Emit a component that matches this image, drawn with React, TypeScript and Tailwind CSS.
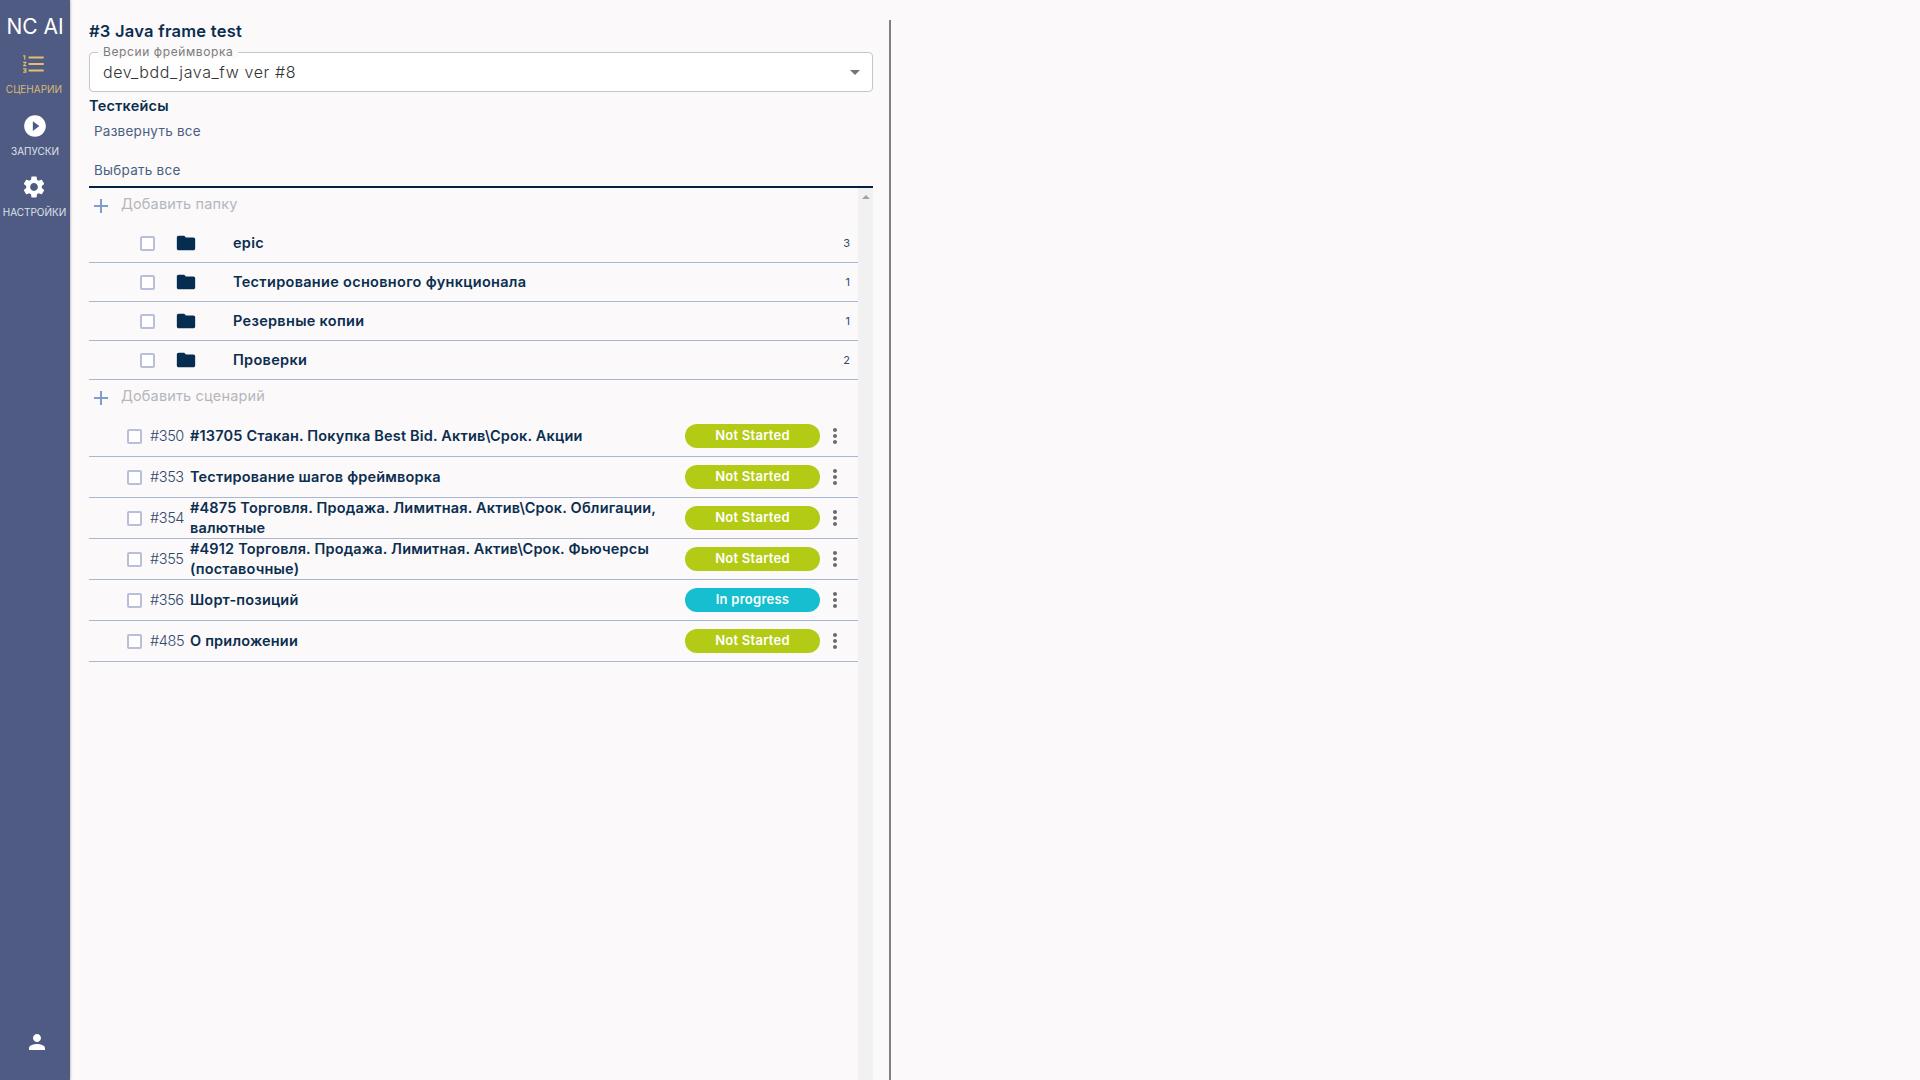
import { ReactNode } from "react";

const font = "font-['Inter','Noto_Sans',sans-serif]";

const icons = {
  list: "M2 17h2v.5H3v1h1v.5H2v1h3v-4H2v1zm1-9h1V4H2v1h1v3zm-1 3h1.8L2 13.1v.9h3v-1H3.2L5 10.9V10H2v1zm5-6v2h14V5H7zm0 14h14v-2H7v2zm0-6h14v-2H7v2z",
  play: "M12 2C6.48 2 2 6.48 2 12s4.48 10 10 10 10-4.48 10-10S17.52 2 12 2zm-2 14.5v-9l6 4.5-6 4.5z",
  gear: "M19.14 12.94c.04-.3.06-.61.06-.94 0-.32-.02-.64-.07-.94l2.03-1.58c.18-.14.23-.41.12-.61l-1.92-3.32c-.12-.22-.37-.29-.59-.22l-2.39.96c-.5-.38-1.03-.7-1.62-.94l-.36-2.54c-.04-.24-.24-.41-.48-.41h-3.84c-.24 0-.43.17-.47.41l-.36 2.54c-.59.24-1.13.57-1.62.94l-2.39-.96c-.22-.08-.47 0-.59.22L2.74 8.87c-.12.21-.08.47.12.61l2.03 1.58c-.05.3-.09.63-.09.94s.02.64.07.94l-2.03 1.58c-.18.14-.23.41-.12.61l1.92 3.32c.12.22.37.29.59.22l2.39-.96c.5.38 1.03.7 1.62.94l.36 2.54c.05.24.24.41.48.41h3.84c.24 0 .44-.17.47-.41l.36-2.54c.59-.24 1.13-.56 1.62-.94l2.39.96c.22.08.47 0 .59-.22l1.92-3.32c.12-.22.07-.47-.12-.61l-2.01-1.58zM12 15.6c-1.98 0-3.6-1.62-3.6-3.6s1.62-3.6 3.6-3.6 3.6 1.62 3.6 3.6-1.62 3.6-3.6 3.6z",
  person: "M12 12c2.21 0 4-1.79 4-4s-1.79-4-4-4-4 1.79-4 4 1.79 4 4 4zm0 2c-2.67 0-8 1.34-8 4v2h16v-2c0-2.66-5.33-4-8-4z",
  folder: "M10 4H4c-1.1 0-1.99.9-1.99 2L2 18c0 1.1.9 2 2 2h16c1.1 0 2-.9 2-2V8c0-1.1-.9-2-2-2h-8l-2-2z",
  more: "M12 8c1.1 0 2-.9 2-2s-.9-2-2-2-2 .9-2 2 .9 2 2 2zm0 2c-1.1 0-2 .9-2 2s.9 2 2 2 2-.9 2-2-.9-2-2-2zm0 6c-1.1 0-2 .9-2 2s.9 2 2 2 2-.9 2-2-.9-2-2-2z",
  plus: "M19 13h-6v6h-2v-6H5v-2h6V5h2v6h6v2z",
};

function Icon({ d, className }: { d: string; className: string }) {
  return (
    <svg viewBox="0 0 24 24" fill="currentColor" className={className}>
      <path d={d} />
    </svg>
  );
}

function NavItem({ d, label, active, className }: { d: string; label: string; active?: boolean; className: string }) {
  return (
    <div className={`flex flex-col items-center ${className} ${active ? "text-[#e5bf6c]" : "text-white"}`}>
      <Icon d={d} className="w-[26px] h-[26px]" />
      <span className={`mt-[6px] text-[10px] leading-[13px] ${active ? "text-[#d9b977]" : "text-[#dfe2ea]"}`}>{label}</span>
    </div>
  );
}

function Checkbox({ className }: { className: string }) {
  return <span className={`block w-[15px] h-[15px] shrink-0 rounded-[2px] border-2 border-[#b9bfdb] bg-white ${className}`} />;
}

function AddRow({ label, className }: { label: string; className: string }) {
  return (
    <div className={`flex items-center text-[#b4b7bd] ${className}`}>
      <Icon d={icons.plus} className="w-[24px] h-[24px] text-[#7f9cce] mt-[4px]" />
      <span className="ml-[8px] text-[14.5px] tracking-[0.15px]">{label}</span>
    </div>
  );
}

function FolderRow({ title, count }: { title: string; count: number }) {
  return (
    <div className="flex items-center h-[39px] border-b border-[#a9b7d1]">
      <Checkbox className="ml-[51px]" />
      <Icon d={icons.folder} className="w-[22px] h-[22px] ml-[20px] text-[#062c50]" />
      <span className="ml-[36px] text-[14.5px] font-semibold text-[#0b2e4f] tracking-[0.3px]">{title}</span>
      <span className="ml-auto mr-[8px] text-[11px] text-[#32496b]">{count}</span>
    </div>
  );
}

function Pill({ status }: { status: string }) {
  const bg = status === "In progress" ? "bg-[#15bfcf]" : "bg-[#b4cb15]";
  return (
    <span className={`flex items-center justify-center w-[135px] h-[24px] shrink-0 rounded-full text-white text-[13px] font-semibold tracking-[0.25px] ${bg}`}>
      {status}
    </span>
  );
}

function ScenarioRow({ id, title, status }: { id: string; title: ReactNode; status: string }) {
  return (
    <div className="flex items-center h-[41px] border-b border-[#a9b7d1]">
      <Checkbox className="ml-[38px]" />
      <span className="ml-[8px] w-[40px] shrink-0 text-[14.5px] font-light tracking-[-0.4px] text-[#32496b]">{id}</span>
      <span className="w-[495px] shrink-0 text-[14.5px] leading-[20px] font-semibold text-[#0b2e4f] tracking-[0.18px] whitespace-pre-line">{title}</span>
      <Pill status={status} />
      <Icon d={icons.more} className="w-[24px] h-[24px] ml-[3px] text-[#6b6b6b]" />
    </div>
  );
}

const folders = [
  { title: "epic", count: 3 },
  { title: "Тестирование основного функционала", count: 1 },
  { title: "Резервные копии", count: 1 },
  { title: "Проверки", count: 2 },
];

const scenarios = [
  { id: "#350", title: "#13705 Стакан. Покупка Best Bid. Актив\\Срок. Акции", status: "Not Started" },
  { id: "#353", title: "Тестирование шагов фреймворка", status: "Not Started" },
  { id: "#354", title: "#4875 Торговля. Продажа. Лимитная. Актив\\Срок. Облигации,\nвалютные", status: "Not Started" },
  { id: "#355", title: "#4912 Торговля. Продажа. Лимитная. Актив\\Срок. Фьючерсы\n(поставочные)", status: "Not Started" },
  { id: "#356", title: "Шорт-позиций", status: "In progress" },
  { id: "#485", title: "О приложении", status: "Not Started" },
];

export default function App() {
  return (
    <div className={`flex h-[1080px] overflow-hidden bg-[#fbf9fa] ${font}`}>
      {/* Sidebar */}
      <aside className="flex flex-col items-center w-[70px] shrink-0 bg-[#4f5b82] shadow-[1px_0_2px_rgba(0,0,0,0.2)]">
        <div className="mt-[14px] text-[21px] leading-[25px] text-white whitespace-nowrap">NC AI</div>
        <NavItem d={icons.list} label="СЦЕНАРИИ" active className="mt-[12px] -ml-[2px]" />
        <NavItem d={icons.play} label="ЗАПУСКИ" className="mt-[17px]" />
        <NavItem d={icons.gear} label="НАСТРОЙКИ" className="mt-[16px] -ml-[1px]" />
        <Icon d={icons.person} className="w-[24px] h-[24px] mt-auto mb-[26px] ml-[3px] text-white" />
      </aside>

      {/* Main column */}
      <main className="w-[784px] ml-[19px] shrink-0 flex flex-col">
        <h1 className="mt-[21px] text-[16.5px] leading-[20px] font-semibold text-[#0b2e4f] tracking-[0.25px]">#3 Java frame test</h1>

        <div className="relative mt-[11px] flex items-center h-[40px] shrink-0 bg-white border border-[#c6c6c6] rounded-[4px] px-[13px]">
          <span className="absolute -top-[8px] left-[8px] px-[5px] bg-[#fbf9fa] text-[12px] leading-[13px] text-[#7c7c7c] tracking-[0.6px]">
            Версии фреймворка
          </span>
          <span className="text-[16px] font-light text-[#333333] tracking-[0.6px]">dev_bdd_java_fw ver #8</span>
          <span className="ml-auto -mr-[1px] w-0 h-0 border-l-[5px] border-r-[5px] border-t-[5px] border-l-transparent border-r-transparent border-t-[#757575]" />
        </div>

        <h2 className="mt-[5px] text-[14.5px] leading-[18px] font-semibold text-[#0b2e4f] tracking-[0.2px]">Тесткейсы</h2>
        <div className="mt-[7px] ml-[5px] text-[13.5px] leading-[18px] text-[#4a5f7f] tracking-[0.25px]">Развернуть все</div>
        <div className="mt-[21px] pl-[5px] h-[25px] border-b-2 border-[#02223f] text-[13.5px] leading-[18px] text-[#4a5f7f] tracking-[0.25px] box-content">
          Выбрать все
        </div>

        {/* Tree with its scrollbar */}
        <div className="flex flex-1 min-h-0">
          <div className="flex-1 min-w-0">
            <AddRow label="Добавить папку" className="h-[32px]" />
            <div className="mt-[4px]">
              {folders.map((f) => (
                <FolderRow key={f.title} title={f.title} count={f.count} />
              ))}
            </div>
            <AddRow label="Добавить сценарий" className="h-[32px]" />
            <div className="mt-[4px]">
              {scenarios.map((s) => (
                <ScenarioRow key={s.id} id={s.id} title={s.title} status={s.status} />
              ))}
            </div>
          </div>
          <div className="w-[15px] shrink-0 bg-[#f1f1f1] flex justify-center pt-[7px]">
            <span className="w-0 h-0 border-l-[4px] border-r-[4px] border-b-[4px] border-l-transparent border-r-transparent border-b-[#a3a3a3]" />
          </div>
        </div>
      </main>

      {/* Right pane divider */}
      <div className="ml-[16px] mt-[20px] w-[2px] shrink-0 bg-[#808080]" />
    </div>
  );
}
